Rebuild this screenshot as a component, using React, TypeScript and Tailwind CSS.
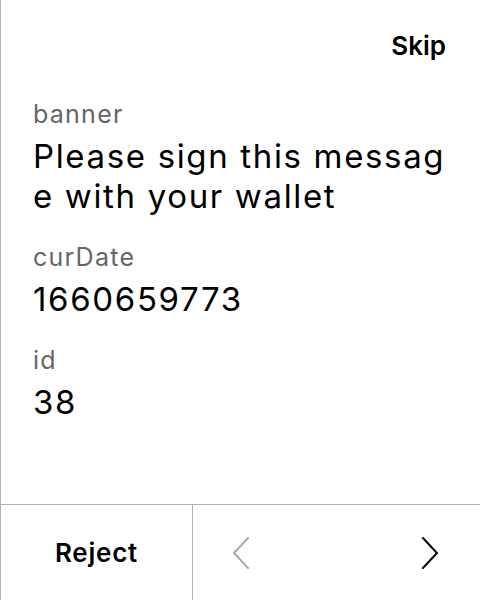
import React from "react";

function Chevron({ dir, color }: { dir: "left" | "right"; color: string }) {
  return (
    <svg width="20" height="32" viewBox="0 0 20 32" fill="none">
      {dir === "left" ? (
        <polyline points="17,1 3,16 17,31" stroke={color} strokeWidth="2" strokeLinecap="square" fill="none" />
      ) : (
        <polyline points="3,1 17,16 3,31" stroke={color} strokeWidth="2" strokeLinecap="square" fill="none" />
      )}
    </svg>
  );
}

export default function App() {
  const items = [
    { label: "banner", value: "Please sign this message with your wallet" },
    { label: "curDate", value: "1660659773" },
    { label: "id", value: "38" },
  ];
  return (
    <div
      className="w-[480px] h-[600px] bg-white border-l border-[#b3b3b3] flex flex-col text-black"
      style={{ fontFamily: "Inter, 'Noto Sans', sans-serif" }}
    >
      <div className="flex-1 flex flex-col px-8">
        <div className="flex justify-end pt-[28px]">
          <span className="text-[26px] leading-[36px] font-semibold pr-[2px]">Skip</span>
        </div>
        <div className="flex flex-col gap-[25px] mt-[34px]">
          {items.map((it) => (
            <div key={it.label} className="flex flex-col">
              <span className="text-[25px] leading-[32px] tracking-[0.05em] text-[#666666] mb-1.5">{it.label}</span>
              <span className="text-[33px] leading-[40px] tracking-[0.05em] break-all">{it.value}</span>
            </div>
          ))}
        </div>
      </div>
      <div className="h-[96px] border-t border-[#b3b3b3] flex">
        <button className="w-[192px] border-r border-[#b3b3b3] flex items-center justify-center text-[26px] font-semibold tracking-[0.03em]">
          Reject
        </button>
        <div className="flex-1 flex justify-between">
          <button className="w-24 flex items-center justify-center">
            <Chevron dir="left" color="#aaaaaa" />
          </button>
          <button className="w-24 flex items-center justify-center pr-1">
            <Chevron dir="right" color="#000000" />
          </button>
        </div>
      </div>
    </div>
  );
}
